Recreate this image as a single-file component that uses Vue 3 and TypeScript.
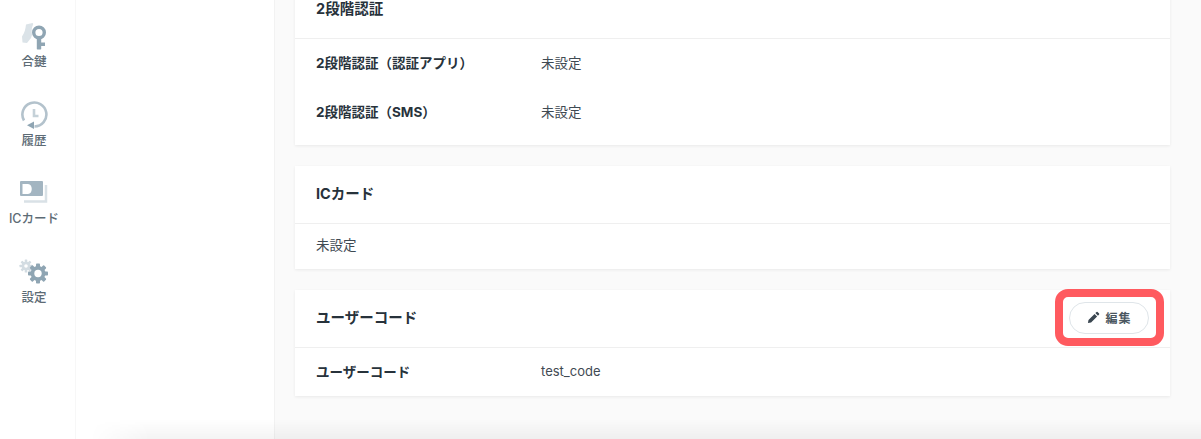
<script setup lang="ts">
interface Row { label: string; value: string; latin?: boolean }
interface Card { title: string; rows?: Row[]; plain?: string; edit?: boolean; cls: string }
const navItems = ['合鍵', '履歴', 'ICカード', '設定']
const teeth = [0, 45, 90, 135]
const cards: Card[] = [
  { title: '2段階認証', cls: 'two', rows: [
    { label: '2段階認証（認証アプリ）', value: '未設定' },
    { label: '2段階認証（SMS）', value: '未設定' } ] },
  { title: 'ICカード', cls: 'ic', plain: '未設定' },
  { title: 'ユーザーコード', cls: 'code', edit: true, rows: [{ label: 'ユーザーコード', value: 'test_code', latin: true }] }
]
</script>

<template>
  <div class="page">
    <nav class="rail">
      <div v-for="(item, i) in navItems" :key="item" class="nav-item">
        <svg v-if="i === 0" class="icon" viewBox="0 0 30 30">
          <path d="M7 2.500L13.500 1c1 .3.8 1.500.2 2.500C12.500 6 12.500 9 13 13l-1 3-4 5-4.500-.5L3 14.500C5.500 11 6.500 7 7 2.500z" fill="#dbe3e8"/>
          <circle cx="20" cy="10.500" r="5.300" fill="#fff" stroke="#8fa5b3" stroke-width="3.400"/>
          <path d="M17.800 15h4.400v5.500H26v3.500h-3.800v3c0 .8-4.400.8-4.400 0z" fill="#8fa5b3"/>
        </svg>
        <svg v-else-if="i === 1" class="icon" viewBox="0 0 30 30">
          <path d="M5 19.500A12 12 0 1 1 15.500 25.500" fill="none" stroke="#b3c2cc" stroke-width="2.600"/>
          <path d="M15 20.500V28L8 24.200z" fill="#8fa5b3"/>
          <path d="M15 8v7h4.500" fill="none" stroke="#c5d1d8" stroke-width="2.600"/>
        </svg>
        <svg v-else-if="i === 2" class="icon" viewBox="0 0 30 30">
          <path d="M5 22.500h22V6" fill="none" stroke="#d9e1e6" stroke-width="2.500"/>
          <rect x="1" y="2" width="23" height="15" rx="1" fill="#a3b5c1"/>
          <path d="M3.500 5H9c5 0 5 10 0 10H3.500z" fill="#fff"/>
        </svg>
        <svg v-else class="icon" viewBox="0 0 30 30">
          <g fill="#d3dce2">
            <rect v-for="a in teeth" :key="a" x="5.700" y="1.500" width="2.600" height="13" rx=".6" :transform="`rotate(${a} 7 8)`"/>
          </g>
          <circle cx="7" cy="8" r="4.300" fill="#d3dce2"/>
          <circle cx="7" cy="8" r="1.800" fill="#fff"/>
          <g fill="#8fa5b3">
            <rect v-for="a in teeth" :key="a" x="17" y="5.500" width="4" height="20" rx=".8" :transform="`rotate(${a} 19 15.500)`"/>
          </g>
          <circle cx="19" cy="15.500" r="7.400" fill="#8fa5b3"/>
          <circle cx="19" cy="15.500" r="3.700" fill="#fff"/>
        </svg>
        <span class="nav-label">{{ item }}</span>
      </div>
    </nav>
    <aside class="subnav"></aside>
    <main class="content">
      <section v-for="card in cards" :key="card.title" class="card" :class="card.cls">
        <header class="card-head">
          <h2 class="card-title">{{ card.title }}</h2>
          <div v-if="card.edit" class="edit-wrap">
            <button class="edit-btn" type="button">
              <svg class="pen" viewBox="0 0 14 14"><path d="M1 13l.6-3.400 6.500-6.500 2.800 2.800-6.500 6.500zM9 2.200l1.300-1.200a.8.8 0 0 1 1.100 0l1.600 1.600a.8.8 0 0 1 0 1.100L11.800 5z" fill="#3a4650"/></svg>
              <span>編集</span>
            </button>
          </div>
        </header>
        <div class="card-body">
          <p v-if="card.plain" class="plain">{{ card.plain }}</p>
          <dl v-for="row in card.rows" :key="row.label" class="row">
            <dt class="label">{{ row.label }}</dt>
            <dd class="value" :class="{ latin: row.latin }">{{ row.value }}</dd>
          </dl>
        </div>
      </section>
    </main>
    <div class="bottom-shade"></div>
  </div>
</template>

<style scoped>
.page {
  position: relative;
  display: flex;
  width: 1201px;
  height: 439px;
  overflow: hidden;
  background: #fafafa;
  font-family: Inter, "Noto Sans CJK JP", sans-serif;
  color: #27323b;
}
.rail {
  flex: 0 0 76px;
  box-sizing: border-box;
  background: #fff;
  border-right: 1px solid #f7f7f7;
  display: flex;
  flex-direction: column;
  align-items: center;
  padding: 22px 7px 0 0;
  gap: 24.6px;
}
.nav-item {
  display: flex;
  flex-direction: column;
  align-items: center;
  height: 54px;
  gap: 1px;
}
.icon { width: 30px; height: 30px; display: block; flex: none; }
.nav-label {
  font-size: 12.5px;
  font-weight: 500;
  line-height: 18px;
  color: #5d6b75;
  white-space: nowrap;
}
.subnav {
  flex: 0 0 198px;
  background: #fff;
  border-right: 1px solid #f2f2f2;
}
.content {
  flex: 1;
  display: flex;
  flex-direction: column;
  gap: 21px;
  padding: 0 31px 0 20px;
  margin-top: -20px;
}
.card {
  background: #fff;
  box-shadow: 0 1px 3px rgba(0, 0, 0, 0.07);
}
.card-head {
  position: relative;
  display: flex;
  align-items: center;
  justify-content: space-between;
  height: 58px;
  box-sizing: border-box;
  padding: 0 21px;
  border-bottom: 1px solid #efefef;
}
.two .card-head { height: 59px; }
.card-title {
  margin: 0;
  font-size: 14.5px;
  font-weight: 700;
  color: #27323b;
}
.two .card-title { margin-bottom: 4px; }
.ic .card-title { margin-bottom: 4px; }
.code .card-title { margin-bottom: 5px; }
.two .card-body { padding: 0 21px 10px; margin-top: -2px; }
.ic .card-body { padding: 11px 21px 14px; }
.code .card-body { padding: 0 21px 3px; }
.code .row { height: 45px; }
.plain {
  margin: 0;
  font-size: 13.5px;
  line-height: 20px;
  color: #3f4a53;
}
.row {
  display: flex;
  align-items: center;
  height: 49px;
  margin: 0;
}
.label {
  width: 225px;
  font-size: 13.5px;
  font-weight: 700;
  color: #27323b;
}
.value {
  margin: 0;
  font-size: 13.5px;
  color: #3f4a53;
}
.value.latin { font-size: 13px; }
.edit-wrap {
  position: absolute;
  left: 760px;
  top: -1px;
  width: 109px;
  height: 57px;
  box-sizing: border-box;
  border: 8px solid #ff5a5f;
  border-radius: 13px;
  display: flex;
  align-items: center;
  justify-content: center;
}
.edit-btn {
  display: flex;
  align-items: center;
  justify-content: center;
  gap: 5px;
  flex: 0 0 80px;
  height: 32px;
  padding: 0 0 0 1px;
  margin-left: -1px;
  background: #fff;
  border: 1px solid #dfe5e9;
  border-radius: 16px;
  font: 700 12px Inter, "Noto Sans CJK JP", sans-serif;
  letter-spacing: 1px;
  color: #4a5660;
}
.pen { width: 13px; height: 13px; }
.bottom-shade {
  position: absolute;
  left: 90px;
  right: 0;
  bottom: 0;
  height: 20px;
  pointer-events: none;
  background: linear-gradient(to bottom, rgba(0, 0, 0, 0), rgba(0, 0, 0, 0.045));
  -webkit-mask-image: linear-gradient(to right, transparent, #000 60px);
  mask-image: linear-gradient(to right, transparent, #000 60px);
}
</style>
